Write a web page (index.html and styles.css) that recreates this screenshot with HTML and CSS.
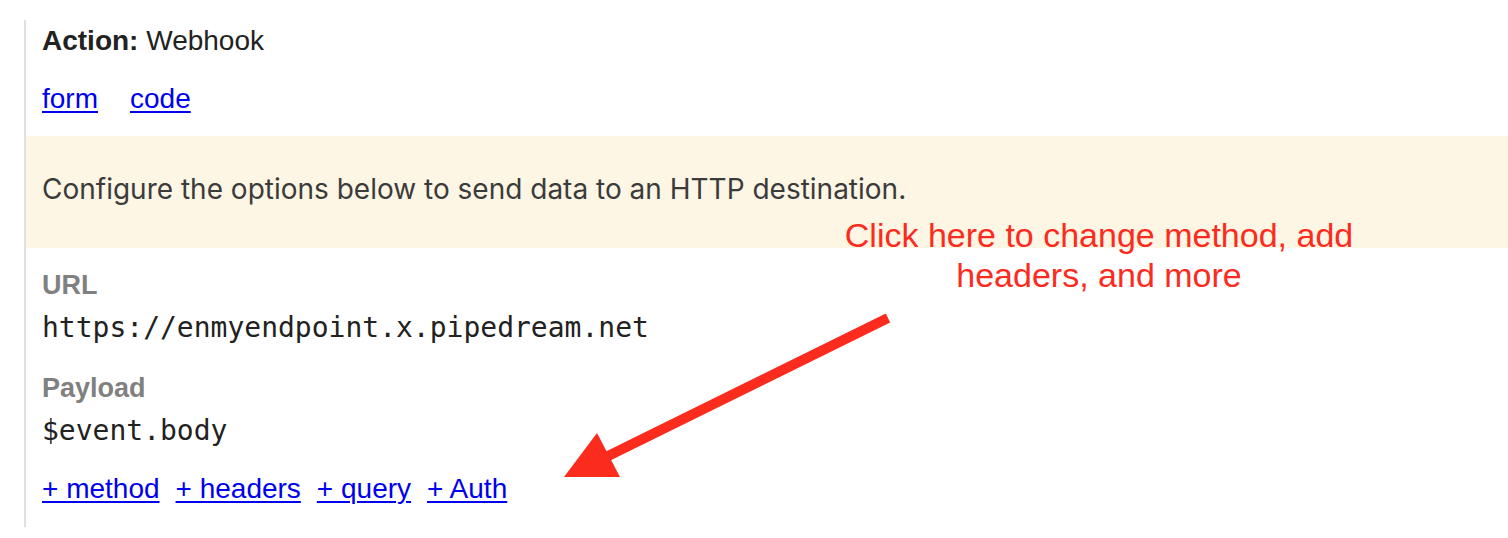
FILE: index.html
```html
<!DOCTYPE html>
<html>
<head>
<meta charset="utf-8">
<link rel="stylesheet" href="styles.css">
</head>
<body>
<div class="page">
  <div class="panel">
    <div class="title"><b>Action:</b> Webhook</div>
    <div class="tabs"><a href="#">form</a><a href="#">code</a></div>
    <div class="notice">Configure the options below to send data to an HTTP destination.</div>
    <div class="field">
      <div class="label">URL</div>
      <div class="value">https://enmyendpoint.x.pipedream.net</div>
    </div>
    <div class="field">
      <div class="label">Payload</div>
      <div class="value">$event.body</div>
    </div>
    <div class="adds"><a href="#">+ method</a><a href="#">+ headers</a><a href="#">+ query</a><a href="#">+ Auth</a></div>
  </div>
  <div class="note">Click here to change method, add<br>headers, and more</div>
  <svg class="arrow" width="1508" height="538" viewBox="0 0 1508 538">
    <line x1="888" y1="318" x2="600" y2="460" stroke="#fb2b1e" stroke-width="10"/>
    <polygon points="597,433 564,477 620,477" fill="#fb2b1e"/>
  </svg>
</div>
</body>
</html>
```
FILE: styles.css
```css
html, body {
  margin: 0;
  padding: 0;
  background: #fff;
}
.page {
  position: relative;
  width: 1508px;
  height: 538px;
  overflow: hidden;
  padding-top: 20px;
  box-sizing: border-box;
}
.panel {
  margin-left: 24px;
  border-left: 2px solid #dde1e6;
  padding: 5px 0 22px 16px;
  font-family: "Liberation Sans", Arial, sans-serif;
  font-size: 28px;
  line-height: 32px;
  color: #222;
}
.title b {
  font-weight: bold;
}
.tabs {
  margin-top: 26px;
  display: flex;
  gap: 32px;
}
a {
  color: #0000ee;
  text-decoration: underline;
  text-underline-offset: 3px;
  text-decoration-thickness: 2px;
}
.notice {
  margin: 21px 0 0 -16px;
  padding: 37px 16px 43px 16px;
  background: #fef6e4;
  font-family: Inter, "Noto Sans", sans-serif;
  font-size: 28px;
  line-height: 32px;
  color: #3b3b3b;
}
.field {
  margin-top: 21px;
}
.field + .field {
  margin-top: 27px;
}
.label {
  font-weight: bold;
  font-size: 27px;
  color: #808080;
}
.value {
  margin-top: 10px;
  font-family: "DejaVu Sans Mono", monospace;
  font-size: 28px;
  line-height: 34px;
  color: #222;
}
.adds {
  margin-top: 25px;
  display: flex;
  gap: 16px;
}
.note {
  position: absolute;
  left: 799px;
  top: 215px;
  width: 600px;
  text-align: center;
  font-family: "Liberation Sans", Arial, sans-serif;
  font-size: 34px;
  line-height: 40px;
  color: #fb2b1e;
}
.arrow {
  position: absolute;
  left: 0;
  top: 0;
}
```
